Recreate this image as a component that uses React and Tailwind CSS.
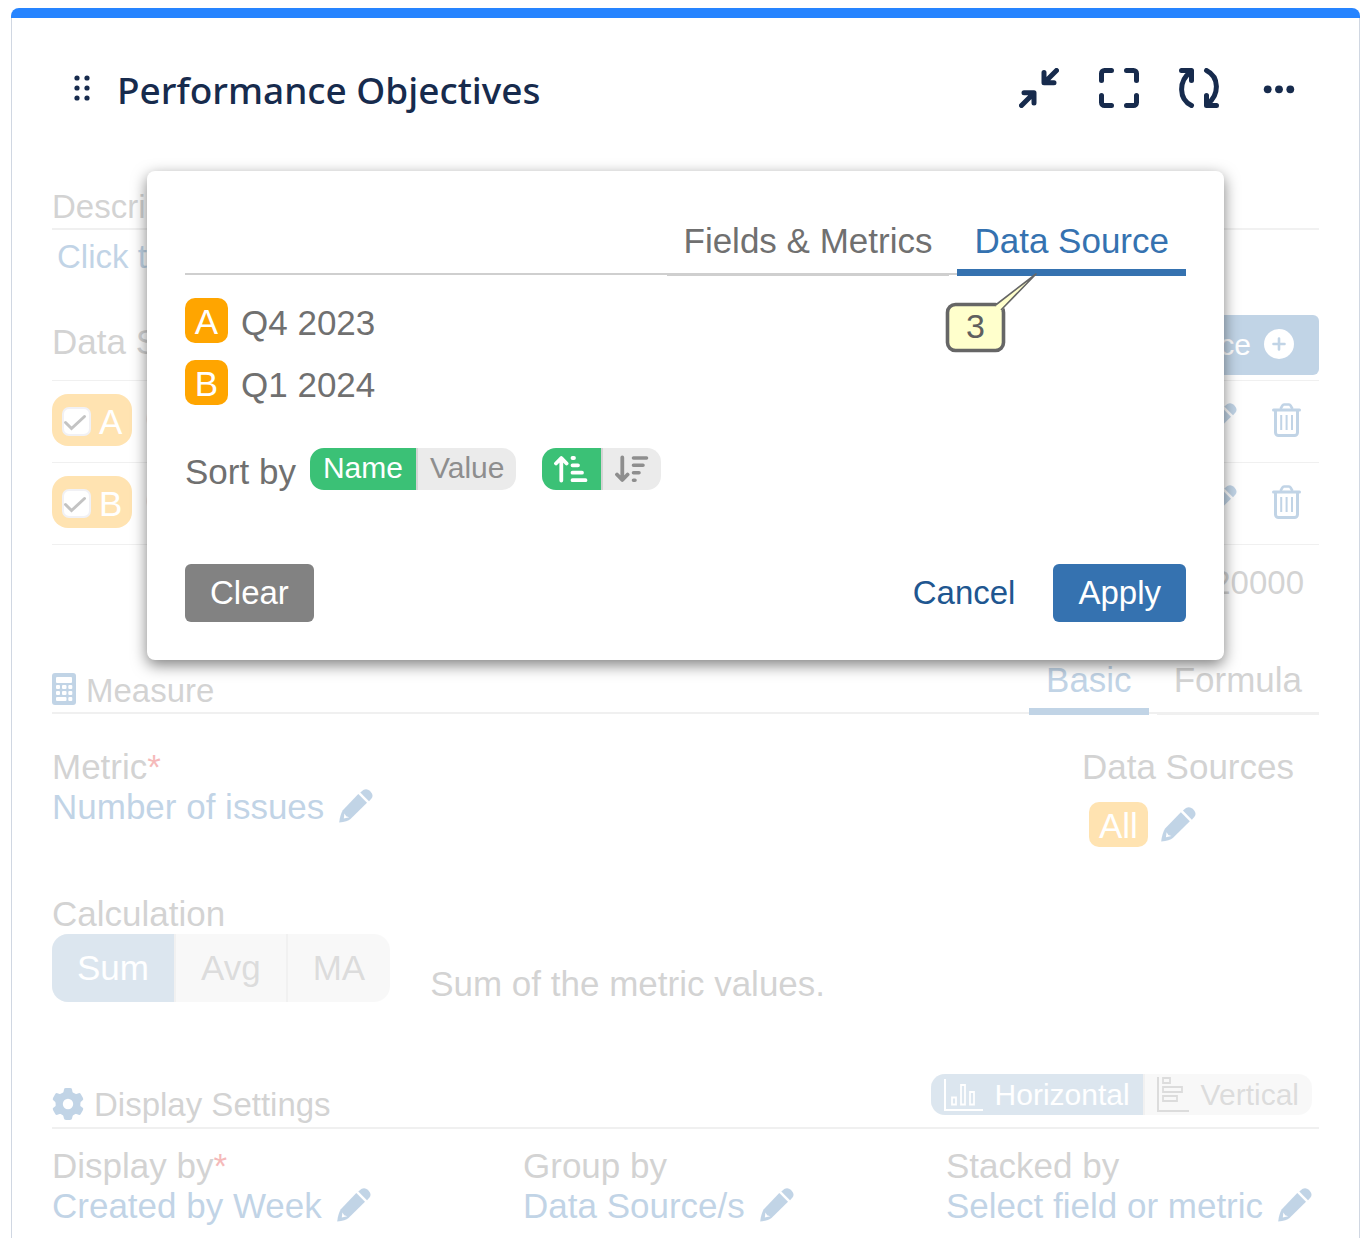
import React, { useState } from "react";
import clsx from "clsx";

const SOURCES = [
  { id: "A", name: "Q4 2023" },
  { id: "B", name: "Q1 2024" },
];

const DISPLAY_FIELDS = [
  { label: "Display by", value: "Created by Week", required: true },
  { label: "Group by", value: "Data Source/s" },
  { label: "Stacked by", value: "Select field or metric" },
];

const PencilIcon = ({ className }) => (
  <svg viewBox="0 0 34 34" className={className} fill="currentColor" aria-hidden="true">
    <path d="M19.3 5 28 13.8 11.5 30Q8.500 32.500 .2 33.600 1 26 3.800 21.200Z" />
    <path d="M21.300 3.500 24.300 1Q27.800-1 30.800 1.800L32.600 4Q34.600 7 32.300 9.800L30 12.300Z" />
    <path d="M5.400 24.500 4.800 29.400 10.200 28.200 7.200 27.200Z" fill="#fff" />
  </svg>
);

const TrashIcon = () => (
  <svg viewBox="0 0 29 34" className="h-[34px] w-[29px]" fill="none" stroke="currentColor" aria-hidden="true">
    <path d="M1.500 7h26" strokeWidth="3" strokeLinecap="round" />
    <path d="M8.500 6 10.500 2.500Q11 1.500 12 1.500h5Q18 1.500 18.500 2.500L20.500 6" strokeWidth="2.600" />
    <path d="M3.500 8v21.500a3 3 0 0 0 3 3h16a3 3 0 0 0 3-3V8" strokeWidth="3" />
    <path d="M9.200 12v15M14.600 12v15M20 12v15" strokeWidth="2" />
  </svg>
);

const CalculatorIcon = () => (
  <svg viewBox="0 0 24 32" className="h-8 w-6" aria-hidden="true">
    <rect width="24" height="32" rx="3" fill="currentColor" />
    <g fill="#fff">
      <rect x="4" y="4" width="16" height="6" rx="1" />
      <rect x="4" y="12" width="4" height="4" rx="1" />
      <rect x="10" y="12" width="4.500" height="4" rx="1" />
      <rect x="16.300" y="12" width="4" height="4" rx="1" />
      <rect x="4" y="18" width="4" height="4" rx="1" />
      <rect x="10" y="18" width="4.500" height="4" rx="1" />
      <rect x="16.300" y="18" width="4" height="4" rx="1" />
      <rect x="4" y="24" width="10.500" height="4" rx="1" />
      <rect x="16.300" y="24" width="4" height="4" rx="1" />
    </g>
  </svg>
);

const GearIcon = () => (
  <svg viewBox="0 0 32 32" className="size-8" fill="currentColor" aria-hidden="true">
    <circle cx="16" cy="16" r="12.400" />
    {[0, 60, 120, 180, 240, 300].map((deg) => (
      <path key={deg} transform={`rotate(${deg} 16 16)`} d="M9.800 7Q11.800 5 12 1.400 12.100 0 14 0h4Q19.900 0 20 1.400 20.200 5 22.200 7Z" />
    ))}
    <circle cx="16" cy="16" r="5.200" fill="#fff" />
  </svg>
);

const SortUpIcon = () => (
  <svg viewBox="0 0 34 28" className="h-7 w-[34px]" fill="none" stroke="currentColor" strokeLinecap="round" strokeLinejoin="round" aria-hidden="true">
    <path d="M7.300 25.500V4M2 8.500 7.300 3l5.300 5.500" strokeWidth="3.800" />
    <path d="M18.500 3h1.500M18.500 10.300h5.500M18.500 17.700h9.500M18.500 25.200h13" strokeWidth="3.800" />
  </svg>
);

const SortDownIcon = () => (
  <svg viewBox="0 0 34 28" className="h-7 w-[34px]" fill="none" stroke="currentColor" strokeLinecap="round" strokeLinejoin="round" aria-hidden="true">
    <path d="M7.300 2.500V24M2 19.500 7.300 25l5.300-5.500" strokeWidth="3.800" />
    <path d="M18.500 3h13M18.500 10.300h9.500M18.500 17.700h5.500M18.500 25.200h1.500" strokeWidth="3.600" />
  </svg>
);

const ColumnsIcon = () => (
  <svg viewBox="0 0 39 32" className="h-8 w-[39px]" fill="none" stroke="currentColor" aria-hidden="true">
    <path d="M1 0v31h38" strokeWidth="2" />
    <path d="M8 18.500h4v7H8zM17 6h4v19.500h-4zM26 13h4v12.500h-4z" strokeWidth="1.800" />
  </svg>
);

const BarsIcon = () => (
  <svg viewBox="0 0 32 35" className="h-[35px] w-8" fill="none" stroke="currentColor" aria-hidden="true">
    <path d="M1 0v34h31" strokeWidth="2" />
    <path d="M6 1h7v5H6zM6 10h19v5H6zM6 19h14v5H6z" strokeWidth="1.800" />
  </svg>
);

function HeaderButton({ label, children }) {
  return (
    <button aria-label={label} className="size-10">
      <svg viewBox="0 0 40 40" className="size-10" fill="none" stroke="currentColor" strokeWidth="5" strokeLinecap="round" strokeLinejoin="round">
        {children}
      </svg>
    </button>
  );
}

function Tab({ active, children, onClick }) {
  return (
    <button
      onClick={onClick}
      className={clsx(
        "-mb-[3px] px-[17px] leading-10",
        active ? "border-b-[7px] border-[#3572b0] pb-2 text-[#3572b0]" : "border-b-2 border-[#cfcfcf] pb-[13px]"
      )}
    >
      {children}
    </button>
  );
}

function EditableValue({ children }) {
  return (
    <button className="flex items-center gap-[15px] leading-10 text-[#3572b0]">
      {children}
      <PencilIcon className="mb-[2px] size-[34px]" />
    </button>
  );
}

function SourceRow({ source }) {
  return (
    <li className="flex h-[82px] items-center border-b border-[#cfcfcf] pb-1">
      <label className="flex h-[52px] w-20 items-center gap-2 rounded-2xl bg-[#ffa500] pl-[10px] text-white">
        <span className="relative mt-1 size-[29px]">
          <input type="checkbox" defaultChecked className="peer block size-[29px] appearance-none rounded-[7px] border-2 border-[#d4d4e0] bg-white" />
          <svg viewBox="0 0 29 29" className="pointer-events-none absolute inset-0 hidden peer-checked:block" fill="none" stroke="#3c3c3c" strokeWidth="3" strokeLinecap="round">
            <path d="M3.500 15.500 9.500 21.500 22.500 9.500" />
          </svg>
        </span>
        <span className="mt-1 leading-10">{source.id}</span>
      </label>
      <a href="#" className="ml-[13px] text-[#3572b0]">{source.name}</a>
      <div className="mr-[18px] ml-auto flex items-center gap-[35px] text-[#3572b0]">
        <button aria-label={`Edit ${source.name}`}>
          <PencilIcon className="size-[34px]" />
        </button>
        <button aria-label={`Delete ${source.name}`}>
          <TrashIcon />
        </button>
      </div>
    </li>
  );
}

function DataSourceDialog() {
  const [tab, setTab] = useState("source");
  const [sortBy, setSortBy] = useState("name");
  const [ascending, setAscending] = useState(true);

  const segment = (on) => (on ? "bg-[#3bc176] text-white" : "bg-[#ebebeb] text-[#8e8e8e]");

  return (
    <div role="dialog" className="absolute inset-x-[95px] top-[63px] rounded-lg bg-white px-[38px] pt-[50px] pb-[38px] shadow-[0_5px_15px_rgba(0,0,0,0.5)]">
      <div className="flex justify-end gap-2 border-b-2 border-[#cfcfcf]">
        <Tab active={tab === "fields"} onClick={() => setTab("fields")}>Fields &amp; Metrics</Tab>
        <div className="relative flex">
          <Tab active={tab === "source"} onClick={() => setTab("source")}>Data Source</Tab>
          <div className="pointer-events-none absolute top-[52px] -left-3 h-20 w-[94px]">
            <svg viewBox="0 0 94 80" className="absolute inset-0" fill="#ffffcc" stroke="#666" strokeLinejoin="round" aria-hidden="true">
              <rect x="2.500" y="31.500" width="56" height="46" rx="8" strokeWidth="3.600" />
              <path d="M51 33.500 91 1 56 38Z" stroke="none" />
              <path d="M50 32.500 91 1 56 37" strokeWidth="1.600" />
            </svg>
            <span className="absolute top-[33px] left-0 w-[60px] text-center text-[34px] leading-10 text-[#5f5f5f]">3</span>
          </div>
        </div>
      </div>

      <ul className="mt-[23px] flex flex-col gap-[17px]">
        {SOURCES.map((s) => (
          <li key={s.id} className="flex items-center gap-[13px]">
            <span className="h-[45px] w-[43px] rounded-[10px] bg-[#ffa500] text-center leading-[47px] text-white">{s.id}</span>
            <span className="mt-1 leading-10">{s.name}</span>
          </li>
        ))}
      </ul>

      <div className="mt-[43px] flex h-[42px] items-center">
        <span className="mt-[6px] leading-10">Sort by</span>
        <div className="ml-[14px] flex h-[42px] overflow-hidden rounded-[14px] text-[30px] leading-10">
          <button onClick={() => setSortBy("name")} className={clsx("px-[13px] pb-[2px]", segment(sortBy === "name"))}>Name</button>
          <button onClick={() => setSortBy("value")} className={clsx("border-l-2 border-[#d4d4d4] px-3 pb-[2px]", segment(sortBy === "value"))}>Value</button>
        </div>
        <div className="ml-[26px] flex h-[42px] overflow-hidden rounded-[14px]">
          <button aria-label="Ascending" onClick={() => setAscending(true)} className={clsx("pr-[13px] pl-3", segment(ascending))}>
            <SortUpIcon />
          </button>
          <button aria-label="Descending" onClick={() => setAscending(false)} className={clsx("border-l-2 border-[#d4d4d4] px-3", segment(!ascending))}>
            <SortDownIcon />
          </button>
        </div>
      </div>

      <div className="mt-[74px] flex text-[33px]">
        <button className="h-[58px] rounded-md bg-[#828282] px-[25px] text-white">Clear</button>
        <button className="mr-[38px] ml-auto text-[#205690]">Cancel</button>
        <button className="h-[58px] rounded-md bg-[#3572b0] px-[25px] text-white">Apply</button>
      </div>
    </div>
  );
}

export default function App() {
  return (
    <div className="flex min-h-screen flex-col bg-white pt-2 pr-3 pl-[11px] font-['Liberation_Sans',Arial,sans-serif] text-[35px] text-[#707070]">
      <div className="h-[10px] rounded-t-lg bg-[#2684ff]" />
      <main className="flex-1 border-x border-[#d0d7e2] px-10 pt-[50px] pb-3">
        <header className="flex h-10 items-center pr-5 pl-[22px] text-[#172b4d]">
          <svg viewBox="0 0 16 26" className="h-[26px] w-4" fill="currentColor" aria-hidden="true">
            <circle cx="3" cy="3" r="2.600" />
            <circle cx="13" cy="3" r="2.600" />
            <circle cx="3" cy="13" r="2.600" />
            <circle cx="13" cy="13" r="2.600" />
            <circle cx="3" cy="23" r="2.600" />
            <circle cx="13" cy="23" r="2.600" />
          </svg>
          <h1 className="mt-1 ml-[27px] font-['Noto_Sans','Open_Sans',sans-serif] text-[37px] font-medium whitespace-nowrap">Performance Objectives</h1>
          <div className="ml-auto flex gap-10">
            <HeaderButton label="Collapse">
              <path d="M37.500 2.500 26 14M25 4.500v10.300h10M2.500 37.500 14 26M5 24.800h10V35" />
            </HeaderButton>
            <HeaderButton label="Full screen">
              <path d="M2.500 12.500v-7a3 3 0 0 1 3-3h7M27.500 2.500h7a3 3 0 0 1 3 3v7M37.500 27.500v7a3 3 0 0 1-3 3h-7M12.500 37.500h-7a3 3 0 0 1-3-3v-7" />
            </HeaderButton>
            <HeaderButton label="Refresh">
              <path d="M2.500 2.500h10v10M11.500 4C-.5 13-.5 31 12.500 37.500M37.500 37.500h-10v-10M28.500 36C40.500 27 40.500 9 27.500 2.500" />
            </HeaderButton>
            <HeaderButton label="More">
              <g fill="currentColor" stroke="none">
                <circle cx="8.700" cy="21.300" r="3.900" />
                <circle cx="20" cy="21.300" r="3.900" />
                <circle cx="31.300" cy="21.300" r="3.900" />
              </g>
            </HeaderButton>
          </div>
        </header>

        <div className="relative">
          <div className="pt-[79px] opacity-30">
            <h2 className="border-b-2 border-[#cfcfcf] pb-px text-[33px] leading-10">Description</h2>
            <button className="mt-[7px] block pl-[5px] text-[33px] leading-10 text-[#3572b0]">Click to add</button>

            <div className="mt-[38px] flex justify-between border-b border-[#cfcfcf] pb-[5px]">
              <h2 className="pt-[7px] leading-10">Data Sources</h2>
              <button className="flex h-[60px] items-center gap-[13px] rounded-md bg-[#3572b0] px-[25px] pb-[2px] text-[30px] text-white">
                Add Data Source
                <svg viewBox="0 0 30 30" className="size-[30px]" aria-hidden="true">
                  <circle cx="15" cy="15" r="15" fill="#fff" />
                  <path d="M15 9.500v11M9.500 15h11" stroke="#3572b0" strokeWidth="2.600" strokeLinecap="round" />
                </svg>
              </button>
            </div>
            <ul>
              {SOURCES.map((s) => <SourceRow key={s.id} source={s} />)}
            </ul>
            <p className="mt-[18px] pr-[15px] text-right text-[33px] leading-10">20000</p>

            <div className="mt-[57px] flex items-end gap-2 border-b-2 border-[#cfcfcf]">
              <h2 className="mr-auto flex items-center gap-[10px] pb-px text-[33px] leading-10">
                <span className="mb-1 text-[#3572b0]"><CalculatorIcon /></span>
                Measure
              </h2>
              <Tab active>Basic</Tab>
              <Tab>Formula</Tab>
            </div>

            <div className="mt-[33px] flex justify-between">
              <div>
                <h3 className="leading-10">Metric<span className="text-[#e01b1b]">*</span></h3>
                <EditableValue>Number of issues</EditableValue>
              </div>
              <div className="pr-[25px]">
                <h3 className="leading-10">Data Sources</h3>
                <button className="mt-[15px] ml-[7px] flex items-center gap-[13px]">
                  <span className="h-[45px] rounded-[10px] bg-[#ffa500] px-[10px] leading-[47px] text-white">All</span>
                  <PencilIcon className="size-[35px] text-[#3572b0]" />
                </button>
              </div>
            </div>

            <h3 className="mt-[47px] leading-10">Calculation</h3>
            <div className="flex gap-10">
              <div className="flex h-[68px] overflow-hidden rounded-2xl bg-[#ebebeb] text-[#8e8e8e]">
                <button className="bg-[#8eafcd] px-[25px] text-white">Sum</button>
                <button className="border-l-2 border-[#d4d4d4] px-[25px]">Avg</button>
                <button className="border-l-2 border-[#d4d4d4] px-[25px]">MA</button>
              </div>
              <p className="mt-[30px] leading-10">Sum of the metric values.</p>
            </div>

            <div className="mt-[70px] flex h-[55px] border-b-2 border-[#cfcfcf]">
              <h2 className="flex items-center gap-[10px] self-end pb-[2px] text-[33px] leading-10">
                <span className="mb-[2px] text-[#3572b0]"><GearIcon /></span>
                Display Settings
              </h2>
              <div className="mr-[7px] ml-auto flex h-[41px] overflow-hidden rounded-[14px] bg-[#ebebeb] text-[30px] text-[#8e8e8e]">
                <button className="flex items-center gap-3 bg-[#8eafcd] px-[13px] text-white">
                  <ColumnsIcon />
                  Horizontal
                </button>
                <button className="flex items-center gap-3 border-l-2 border-[#d4d4d4] pr-[13px] pl-3">
                  <BarsIcon />
                  Vertical
                </button>
              </div>
            </div>

            <div className="mt-[17px] grid grid-cols-[471fr_423fr_373fr] whitespace-nowrap">
              {DISPLAY_FIELDS.map((f) => (
                <div key={f.label}>
                  <h3 className="leading-10">{f.label}{f.required && <span className="text-[#e01b1b]">*</span>}</h3>
                  <EditableValue>{f.value}</EditableValue>
                </div>
              ))}
            </div>
          </div>

          <DataSourceDialog />
        </div>
      </main>
    </div>
  );
}
